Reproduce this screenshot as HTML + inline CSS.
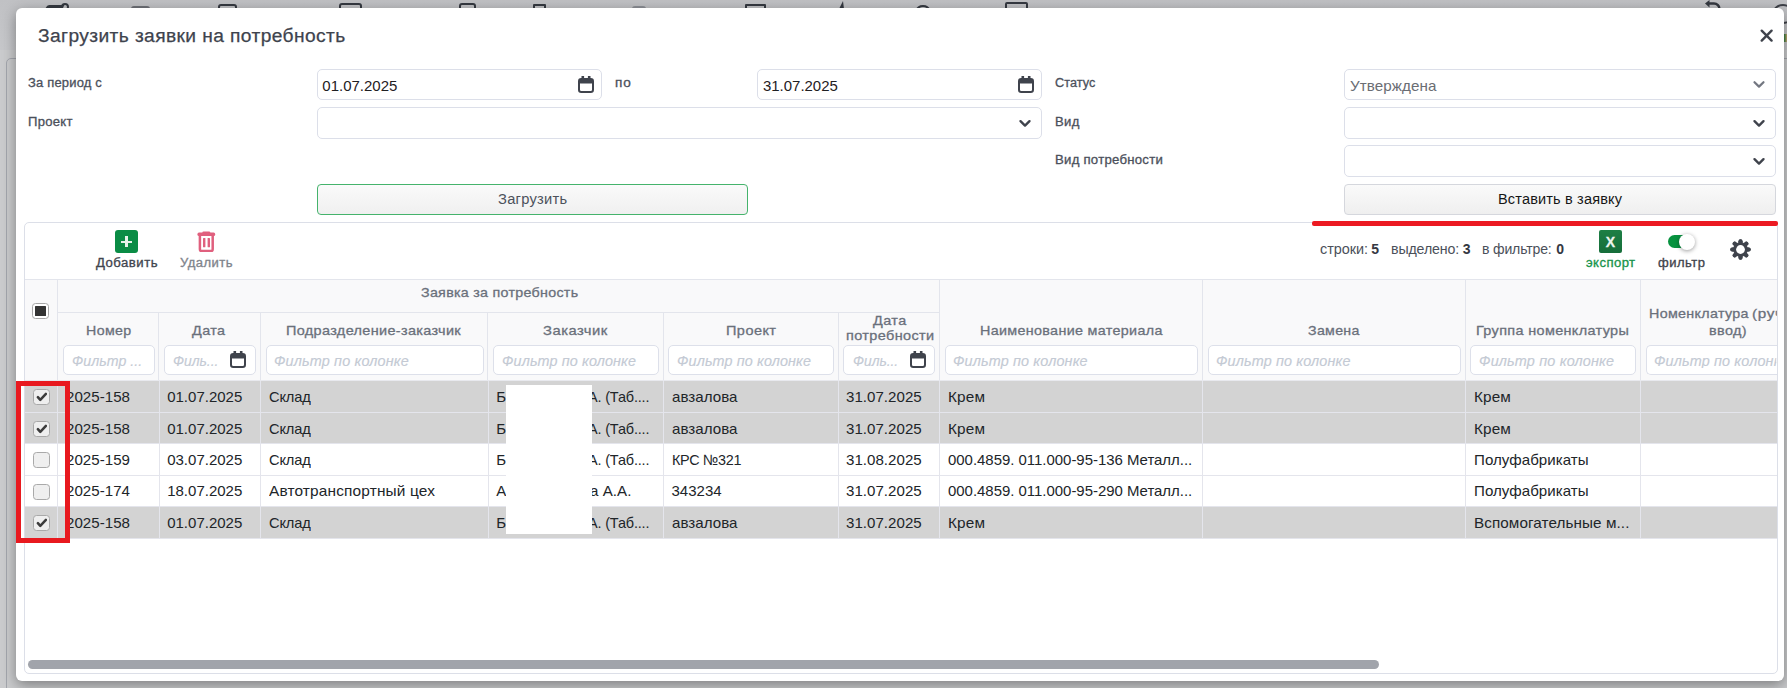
<!DOCTYPE html>
<html><head><meta charset="utf-8">
<style>
*{box-sizing:border-box;margin:0;padding:0}
html,body{width:1787px;height:688px;overflow:hidden}
body{position:relative;background:#cbcccf;font-family:"Liberation Sans",sans-serif}
.a{position:absolute}
.t{position:absolute;white-space:pre;line-height:1}
</style></head><body>
<div class="a" style="left:0;top:0;width:1787px;height:688px;background:#cacbcd"></div>
<div class="a" style="left:0;top:0;width:1787px;height:50px;background:linear-gradient(180deg,#c0c1c4 0,#c6c7ca 100%)"></div>
<div class="a" style="left:6px;top:58px;width:1900px;height:700px;border:1px solid #a3a6ad;border-radius:5px"></div>
<div class="a" style="left:46px;top:5px;width:17px;height:5px;background:#353941;border-radius:2px 0 0 0;transform:skewX(-30deg)"></div>
<div class="a" style="left:61px;top:3px;width:8px;height:8px;border:2px solid #353941;border-radius:50%"></div>
<div class="a" style="left:218px;top:4px;width:19px;height:10px;border:2px solid #353941;border-radius:3px 3px 0 0"></div>
<div class="a" style="left:339px;top:3px;width:23px;height:10px;border:2px solid #353941;border-radius:3px 3px 0 0"></div>
<div class="a" style="left:459px;top:3px;width:17px;height:10px;border:2px solid #353941;border-radius:3px 3px 0 0"></div>
<div class="a" style="left:533px;top:4px;width:13px;height:10px;border:2px solid #353941;border-radius:1px 1px 0 0"></div>
<div class="a" style="left:745px;top:4px;width:21px;height:10px;border:2px solid #353941;border-radius:1px 1px 0 0"></div>
<div class="a" style="left:1005px;top:2px;width:23px;height:10px;border:2px solid #353941;border-radius:2px 2px 0 0"></div>
<div class="a" style="left:131px;top:6px;width:19px;height:4px;background:#6e7177;border-radius:3px 3px 0 0"></div>
<div class="a" style="left:632px;top:6px;width:14px;height:3px;background:#8d9096;border-radius:3px 3px 0 0"></div>
<div class="a" style="left:916px;top:5px;width:14px;height:10px;border:2px solid #353941;border-radius:50% 50% 0 0"></div>
<svg class="a" style="left:836px;top:0" width="10" height="9"><path d="M7 1L3 9H8Z" fill="#353941"/></svg>
<svg class="a" style="left:1701px;top:0" width="24" height="10" viewBox="0 0 24 10"><path d="M8 3.5H13A5.5 5.5 0 0 1 18.5 9" fill="none" stroke="#353941" stroke-width="2.6"/><path d="M8.5 0V7.5L4 3.5Z" fill="#353941"/></svg>
<div class="a" style="left:1772px;top:4px;width:22px;height:20px;border:2.5px solid #3e4148;border-radius:50%"></div>
<div class="a" style="left:1784px;top:34px;width:3px;height:8px;background:linear-gradient(90deg,#2b7a3e,#c9a970)"></div>
<div class="a" style="left:16px;top:8px;width:1768px;height:673px;background:#fff;border-radius:6px;box-shadow:0 4px 14px rgba(0,0,0,.38)"></div>
<svg class="a" style="left:1759px;top:28px" width="15" height="15" viewBox="0 0 15 15"><path d="M2.7 2.7L12.6 12.6M12.6 2.7L2.7 12.6" stroke="#3f434c" stroke-width="2.4" stroke-linecap="round"/></svg>
<div class="a" style="left:317px;top:69px;width:285px;height:31px;border:1px solid #dcdfe9;border-radius:5px;background:#fff"></div>
<div class="a" style="left:757px;top:69px;width:285px;height:31px;border:1px solid #dcdfe9;border-radius:5px;background:#fff"></div>
<div class="a" style="left:317px;top:107px;width:725px;height:32px;border:1px solid #dcdfe9;border-radius:5px;background:#fff"></div>
<div class="a" style="left:1344px;top:69px;width:432px;height:31px;border:1px solid #dcdfe9;border-radius:5px;background:#fff"></div>
<div class="a" style="left:1344px;top:107px;width:432px;height:32px;border:1px solid #dcdfe9;border-radius:5px;background:#fff"></div>
<div class="a" style="left:1344px;top:145px;width:432px;height:32px;border:1px solid #dcdfe9;border-radius:5px;background:#fff"></div>
<div class="a" style="left:317px;top:184px;width:431px;height:31px;border:1px solid #45b36c;border-radius:4px;background:linear-gradient(#fafafa,#f0f0f0)"></div>
<div class="a" style="left:1344px;top:184px;width:432px;height:31px;border:1px solid #d5d7dd;border-radius:4px;background:linear-gradient(#fafafa,#efefef)"></div>
<svg class="a" style="left:578px;top:76px" width="16" height="17" viewBox="0 0 16 17"><rect x="1" y="3" width="14" height="13" rx="2.2" fill="none" stroke="#3f434c" stroke-width="2"/><rect x="1" y="3" width="14" height="4.5" rx="1.5" fill="#3f434c"/><rect x="3.5" y="0" width="2.6" height="4" fill="#3f434c"/><rect x="9.9" y="0" width="2.6" height="4" fill="#3f434c"/></svg>
<svg class="a" style="left:1018px;top:76px" width="16" height="17" viewBox="0 0 16 17"><rect x="1" y="3" width="14" height="13" rx="2.2" fill="none" stroke="#3f434c" stroke-width="2"/><rect x="1" y="3" width="14" height="4.5" rx="1.5" fill="#3f434c"/><rect x="3.5" y="0" width="2.6" height="4" fill="#3f434c"/><rect x="9.9" y="0" width="2.6" height="4" fill="#3f434c"/></svg>
<svg class="a" style="left:1018px;top:118.5px" width="14" height="9" viewBox="0 0 14 9"><path d="M2.5 2.2L7 6.6L11.5 2.2" fill="none" stroke="#3f434c" stroke-width="2.4" stroke-linecap="round" stroke-linejoin="round"/></svg>
<svg class="a" style="left:1752px;top:80px" width="14" height="9" viewBox="0 0 14 9"><path d="M2.5 2.2L7 6.6L11.5 2.2" fill="none" stroke="#737781" stroke-width="2.2" stroke-linecap="round" stroke-linejoin="round"/></svg>
<svg class="a" style="left:1752px;top:118.5px" width="14" height="9" viewBox="0 0 14 9"><path d="M2.5 2.2L7 6.6L11.5 2.2" fill="none" stroke="#3f434c" stroke-width="2.4" stroke-linecap="round" stroke-linejoin="round"/></svg>
<svg class="a" style="left:1752px;top:156.5px" width="14" height="9" viewBox="0 0 14 9"><path d="M2.5 2.2L7 6.6L11.5 2.2" fill="none" stroke="#3f434c" stroke-width="2.4" stroke-linecap="round" stroke-linejoin="round"/></svg>
<div class="a" style="left:24px;top:222px;width:1754px;height:452px;border:1px solid #dcdfe8;border-radius:5px;background:#fff"></div>
<div class="a" style="left:25px;top:279px;width:1752px;height:1px;background:#e3e5ec"></div>
<div class="a" style="left:25px;top:280px;width:1752px;height:100px;background:#f9f9fa"></div>
<div class="a" style="left:115px;top:230px;width:23px;height:23px;background:#0a8c45;border-radius:3px"></div>
<div class="a" style="left:121px;top:240.5px;width:11px;height:2.0px;background:#e6f2ea"></div>
<div class="a" style="left:125.3px;top:236px;width:2.299999999999997px;height:11px;background:#e6f2ea"></div>
<svg class="a" style="left:197px;top:231px" width="19" height="21" viewBox="0 0 19 21"><rect x="5.3" y="0.4" width="8" height="3" rx="1.3" fill="#e0607e"/><rect x="0.4" y="1.6" width="17.8" height="3.4" rx="1.6" fill="#e0607e"/><path d="M2.9 4.6V18.3a1.8 1.8 0 0 0 1.8 1.8H13.9a1.8 1.8 0 0 0 1.8-1.8V4.6" fill="none" stroke="#e0607e" stroke-width="2.5"/><rect x="6" y="7" width="2.4" height="9.3" rx="0.6" fill="#e0607e"/><rect x="10.6" y="7" width="2.4" height="9.3" rx="0.6" fill="#e0607e"/></svg>
<div class="a" style="left:1599px;top:230px;width:23px;height:23px;background:linear-gradient(#1d7f45,#166e3a);border-radius:2px"></div>
<div class="a" style="left:1599px;top:234px;width:23px;text-align:center;font-size:14px;font-weight:bold;color:#eef5f0;line-height:17px;-webkit-text-stroke:0.3px #eef5f0">X</div>
<div class="a" style="left:1668px;top:235px;width:25px;height:13px;border-radius:7px;background:linear-gradient(90deg,#07923f 40%,#2a9d5a)"></div>
<div class="a" style="left:1679px;top:234px;width:16px;height:16px;border-radius:50%;background:#fff;box-shadow:0 1px 4px rgba(0,0,0,.4)"></div>
<svg class="a" style="left:1730px;top:239px" width="21" height="21" viewBox="0 0 21 21"><g fill="#3f434c"><rect x="8.5" y="0.3" width="4" height="20.4" rx="2" transform="rotate(0 10.5 10.5)"/><rect x="8.5" y="0.3" width="4" height="20.4" rx="2" transform="rotate(45 10.5 10.5)"/><rect x="8.5" y="0.3" width="4" height="20.4" rx="2" transform="rotate(90 10.5 10.5)"/><rect x="8.5" y="0.3" width="4" height="20.4" rx="2" transform="rotate(135 10.5 10.5)"/><rect x="8.5" y="0.3" width="4" height="20.4" rx="2" transform="rotate(180 10.5 10.5)"/><rect x="8.5" y="0.3" width="4" height="20.4" rx="2" transform="rotate(225 10.5 10.5)"/><rect x="8.5" y="0.3" width="4" height="20.4" rx="2" transform="rotate(270 10.5 10.5)"/><rect x="8.5" y="0.3" width="4" height="20.4" rx="2" transform="rotate(315 10.5 10.5)"/><circle cx="10.5" cy="10.5" r="7.3"/></g><circle cx="10.5" cy="10.5" r="4.4" fill="#fff"/></svg>
<div class="a" style="left:58px;top:312px;width:881px;height:1px;background:#e3e5ec"></div>
<div class="a" style="left:158px;top:313px;width:1px;height:67px;background:#e3e5ec"></div>
<div class="a" style="left:260px;top:313px;width:1px;height:67px;background:#e3e5ec"></div>
<div class="a" style="left:487px;top:313px;width:1px;height:67px;background:#e3e5ec"></div>
<div class="a" style="left:663px;top:313px;width:1px;height:67px;background:#e3e5ec"></div>
<div class="a" style="left:838px;top:313px;width:1px;height:67px;background:#e3e5ec"></div>
<div class="a" style="left:57px;top:280px;width:1px;height:100px;background:#e3e5ec"></div>
<div class="a" style="left:939px;top:280px;width:1px;height:100px;background:#e3e5ec"></div>
<div class="a" style="left:1202px;top:280px;width:1px;height:100px;background:#e3e5ec"></div>
<div class="a" style="left:1465px;top:280px;width:1px;height:100px;background:#e3e5ec"></div>
<div class="a" style="left:1640px;top:280px;width:1px;height:100px;background:#e3e5ec"></div>
<div class="a" style="left:32px;top:303px;width:17px;height:16px;border:1px solid #a6a6a6;border-radius:3.5px;background:#fff"></div>
<div class="a" style="left:35px;top:306px;width:11px;height:10px;background:#333;border-radius:0.5px"></div>
<div class="a" style="left:63px;top:345px;width:92px;height:30px;border:1px solid #dde0ea;border-radius:5px;background:#fff"></div>
<div class="a" style="left:164px;top:345px;width:92px;height:30px;border:1px solid #dde0ea;border-radius:5px;background:#fff"></div>
<div class="a" style="left:265.5px;top:345px;width:218.0px;height:30px;border:1px solid #dde0ea;border-radius:5px;background:#fff"></div>
<div class="a" style="left:493px;top:345px;width:166px;height:30px;border:1px solid #dde0ea;border-radius:5px;background:#fff"></div>
<div class="a" style="left:668px;top:345px;width:166px;height:30px;border:1px solid #dde0ea;border-radius:5px;background:#fff"></div>
<div class="a" style="left:843px;top:345px;width:92px;height:30px;border:1px solid #dde0ea;border-radius:5px;background:#fff"></div>
<div class="a" style="left:945px;top:345px;width:253px;height:30px;border:1px solid #dde0ea;border-radius:5px;background:#fff"></div>
<div class="a" style="left:1208px;top:345px;width:253px;height:30px;border:1px solid #dde0ea;border-radius:5px;background:#fff"></div>
<div class="a" style="left:1470px;top:345px;width:165.5px;height:30px;border:1px solid #dde0ea;border-radius:5px;background:#fff"></div>
<div class="a" style="left:1646px;top:345px;width:131px;height:30px;border:1px solid #dde0ea;border-radius:5px;background:#fff;border-right:none;border-radius:5px 0 0 5px"></div>
<svg class="a" style="left:230px;top:351px" width="16" height="17" viewBox="0 0 16 17"><rect x="1" y="3" width="14" height="13" rx="2.2" fill="none" stroke="#3f434c" stroke-width="2"/><rect x="1" y="3" width="14" height="4.5" rx="1.5" fill="#3f434c"/><rect x="3.5" y="0" width="2.6" height="4" fill="#3f434c"/><rect x="9.9" y="0" width="2.6" height="4" fill="#3f434c"/></svg>
<svg class="a" style="left:910px;top:351px" width="16" height="17" viewBox="0 0 16 17"><rect x="1" y="3" width="14" height="13" rx="2.2" fill="none" stroke="#3f434c" stroke-width="2"/><rect x="1" y="3" width="14" height="4.5" rx="1.5" fill="#3f434c"/><rect x="3.5" y="0" width="2.6" height="4" fill="#3f434c"/><rect x="9.9" y="0" width="2.6" height="4" fill="#3f434c"/></svg>
<div class="a" style="left:25px;top:380px;width:1752px;height:1px;background:#e8e9ee"></div>
<div class="a" style="left:25px;top:381px;width:1752px;height:31px;background:#d3d3d3"></div>
<div class="a" style="left:25px;top:412px;width:1752px;height:1px;background:#e4e5ec"></div>
<div class="a" style="left:25px;top:413px;width:1752px;height:30px;background:#d3d3d3"></div>
<div class="a" style="left:25px;top:443px;width:1752px;height:1px;background:#e4e5ec"></div>
<div class="a" style="left:25px;top:444px;width:1752px;height:31px;background:#fff"></div>
<div class="a" style="left:25px;top:475px;width:1752px;height:1px;background:#e4e5ec"></div>
<div class="a" style="left:25px;top:476px;width:1752px;height:30px;background:#fff"></div>
<div class="a" style="left:25px;top:506px;width:1752px;height:1px;background:#e4e5ec"></div>
<div class="a" style="left:25px;top:507px;width:1752px;height:31px;background:#d3d3d3"></div>
<div class="a" style="left:25px;top:538px;width:1752px;height:1px;background:#e4e5ec"></div>
<div class="a" style="left:57px;top:381px;width:1px;height:157px;background:#e4e5ec"></div>
<div class="a" style="left:159px;top:381px;width:1px;height:157px;background:#e4e5ec"></div>
<div class="a" style="left:260px;top:381px;width:1px;height:157px;background:#e4e5ec"></div>
<div class="a" style="left:488px;top:381px;width:1px;height:157px;background:#e4e5ec"></div>
<div class="a" style="left:663px;top:381px;width:1px;height:157px;background:#e4e5ec"></div>
<div class="a" style="left:838px;top:381px;width:1px;height:157px;background:#e4e5ec"></div>
<div class="a" style="left:939px;top:381px;width:1px;height:157px;background:#e4e5ec"></div>
<div class="a" style="left:1202px;top:381px;width:1px;height:157px;background:#e4e5ec"></div>
<div class="a" style="left:1465px;top:381px;width:1px;height:157px;background:#e4e5ec"></div>
<div class="a" style="left:1640px;top:381px;width:1px;height:157px;background:#e4e5ec"></div>
<div class="a" style="left:33px;top:389px;width:17px;height:16px;border:1px solid #a9a9a9;border-radius:3.5px;background:#efefef"></div>
<svg class="a" style="left:36px;top:392px" width="11" height="10" viewBox="0 0 11 10"><path d="M1.9 5.2L4.3 7.9L9.9 1.9" fill="none" stroke="#3c3c3c" stroke-width="2.5" stroke-linecap="round" stroke-linejoin="round"/></svg>
<div class="a" style="left:33px;top:421px;width:17px;height:16px;border:1px solid #a9a9a9;border-radius:3.5px;background:#efefef"></div>
<svg class="a" style="left:36px;top:424px" width="11" height="10" viewBox="0 0 11 10"><path d="M1.9 5.2L4.3 7.9L9.9 1.9" fill="none" stroke="#3c3c3c" stroke-width="2.5" stroke-linecap="round" stroke-linejoin="round"/></svg>
<div class="a" style="left:33px;top:452px;width:17px;height:16px;border:1px solid #a9a9a9;border-radius:3.5px;background:#efefef"></div>
<div class="a" style="left:33px;top:484px;width:17px;height:16px;border:1px solid #a9a9a9;border-radius:3.5px;background:#efefef"></div>
<div class="a" style="left:33px;top:515px;width:17px;height:16px;border:1px solid #a9a9a9;border-radius:3.5px;background:#efefef"></div>
<svg class="a" style="left:36px;top:518px" width="11" height="10" viewBox="0 0 11 10"><path d="M1.9 5.2L4.3 7.9L9.9 1.9" fill="none" stroke="#3c3c3c" stroke-width="2.5" stroke-linecap="round" stroke-linejoin="round"/></svg>
<div class="t" style="top:27px;font-size:18px;color:#3e434d;-webkit-text-stroke:0.25px #3e434d;transform:scaleX(1.0655);transform-origin:0 0;letter-spacing:0.378px;left:38.10px;">Загрузить заявки на потребность</div>
<div class="t" style="top:77px;font-size:12.5px;color:#4b505b;-webkit-text-stroke:0.3px #4b505b;transform:scaleX(1.0387);transform-origin:0 0;letter-spacing:0.172px;left:27.80px;">За период с</div>
<div class="t" style="top:116px;font-size:12.5px;color:#4b505b;-webkit-text-stroke:0.3px #4b505b;transform:scaleX(1.0468);transform-origin:0 0;letter-spacing:0.246px;left:28.10px;">Проект</div>
<div class="t" style="top:77px;font-size:12.5px;color:#4b505b;-webkit-text-stroke:0.3px #4b505b;transform:scaleX(1.0859);transform-origin:0 0;letter-spacing:0.724px;left:614.80px;">по</div>
<div class="t" style="top:77px;font-size:12.5px;color:#4b505b;-webkit-text-stroke:0.3px #4b505b;transform:scaleX(1.0134);transform-origin:0 0;letter-spacing:0.070px;left:1055.30px;">Статус</div>
<div class="t" style="top:116px;font-size:12.5px;color:#4b505b;-webkit-text-stroke:0.3px #4b505b;transform:scaleX(1.0471);transform-origin:0 0;letter-spacing:0.339px;left:1055.30px;">Вид</div>
<div class="t" style="top:154px;font-size:12.5px;color:#4b505b;-webkit-text-stroke:0.3px #4b505b;transform:scaleX(1.0533);transform-origin:0 0;letter-spacing:0.239px;left:1055.30px;">Вид потребности</div>
<div class="t" style="top:78px;font-size:15px;color:#1f2023;left:322.30px;">01.07.2025</div>
<div class="t" style="top:78px;font-size:15px;color:#1f2023;transform:scaleX(0.9978);transform-origin:0 0;letter-spacing:-0.012px;left:762.70px;">31.07.2025</div>
<div class="t" style="top:78px;font-size:15px;color:#6a6d73;transform:scaleX(1.0125);transform-origin:0 0;letter-spacing:0.077px;left:1349.70px;">Утверждена</div>
<div class="t" style="top:192px;font-size:14px;color:#4d525c;transform:scaleX(1.0494);transform-origin:0 0;letter-spacing:0.251px;left:498.20px;">Загрузить</div>
<div class="t" style="top:192px;font-size:14px;color:#161616;transform:scaleX(1.0355);transform-origin:0 0;letter-spacing:0.167px;left:1498.20px;">Вставить в заявку</div>
<div class="t" style="top:257px;font-size:12px;color:#41454e;-webkit-text-stroke:0.3px #41454e;transform:scaleX(1.0956);transform-origin:0 0;letter-spacing:0.441px;left:96.00px;">Добавить</div>
<div class="t" style="top:257px;font-size:12px;color:#80848c;-webkit-text-stroke:0.3px #80848c;transform:scaleX(1.0874);transform-origin:0 0;letter-spacing:0.409px;left:179.70px;">Удалить</div>
<div class="t" style="top:257px;font-size:12px;color:#17944a;-webkit-text-stroke:0.3px #17944a;transform:scaleX(1.0917);transform-origin:0 0;letter-spacing:0.397px;left:1586.20px;">экспорт</div>
<div class="t" style="top:257px;font-size:12px;color:#3f434c;-webkit-text-stroke:0.3px #3f434c;transform:scaleX(1.0853);transform-origin:0 0;letter-spacing:0.430px;left:1657.80px;">фильтр</div>
<div class="t" style="top:242px;font-size:14.5px;color:#4b505a;transform:scaleX(0.9938);transform-origin:0 0;letter-spacing:-0.034px;left:1319.80px;">строки:</div>
<div class="t" style="top:242px;font-size:14px;color:#343842;font-weight:bold;left:1371.30px;">5</div>
<div class="t" style="top:242px;font-size:14.5px;color:#4b505a;transform:scaleX(0.9780);transform-origin:0 0;letter-spacing:-0.133px;left:1391.10px;">выделено:</div>
<div class="t" style="top:242px;font-size:14px;color:#343842;font-weight:bold;left:1462.80px;">3</div>
<div class="t" style="top:242px;font-size:14.5px;color:#4b505a;transform:scaleX(0.9693);transform-origin:0 0;letter-spacing:-0.172px;left:1482.40px;">в фильтре:</div>
<div class="t" style="top:242px;font-size:14px;color:#343842;font-weight:bold;left:1556.20px;">0</div>
<div class="t" style="top:286px;font-size:13.5px;color:#6a707b;-webkit-text-stroke:0.3px #6a707b;transform:scaleX(1.0578);transform-origin:0 0;letter-spacing:0.261px;left:421.10px;">Заявка за потребность</div>
<div class="t" style="top:324px;font-size:13.5px;color:#6a707b;-webkit-text-stroke:0.3px #6a707b;transform:scaleX(1.0525);transform-origin:0 0;letter-spacing:0.346px;left:85.60px;">Номер</div>
<div class="t" style="top:324px;font-size:13.5px;color:#6a707b;-webkit-text-stroke:0.3px #6a707b;transform:scaleX(1.0641);transform-origin:0 0;letter-spacing:0.400px;left:192.40px;">Дата</div>
<div class="t" style="top:324px;font-size:13.5px;color:#6a707b;-webkit-text-stroke:0.3px #6a707b;transform:scaleX(1.0704);transform-origin:0 0;letter-spacing:0.326px;left:286.40px;">Подразделение-заказчик</div>
<div class="t" style="top:324px;font-size:13.5px;color:#6a707b;-webkit-text-stroke:0.3px #6a707b;transform:scaleX(1.0957);transform-origin:0 0;letter-spacing:0.461px;left:542.90px;">Заказчик</div>
<div class="t" style="top:324px;font-size:13.5px;color:#6a707b;-webkit-text-stroke:0.3px #6a707b;transform:scaleX(1.0746);transform-origin:0 0;letter-spacing:0.412px;left:725.50px;">Проект</div>
<div class="t" style="top:314px;font-size:13.5px;color:#6a707b;-webkit-text-stroke:0.3px #6a707b;transform:scaleX(1.0661);transform-origin:0 0;letter-spacing:0.412px;left:872.80px;">Дата</div>
<div class="t" style="top:329px;font-size:13.5px;color:#6a707b;-webkit-text-stroke:0.3px #6a707b;transform:scaleX(1.0712);transform-origin:0 0;letter-spacing:0.349px;left:845.90px;">потребности</div>
<div class="t" style="top:324px;font-size:13.5px;color:#6a707b;-webkit-text-stroke:0.3px #6a707b;transform:scaleX(1.0620);transform-origin:0 0;letter-spacing:0.306px;left:979.50px;">Наименование материала</div>
<div class="t" style="top:324px;font-size:13.5px;color:#6a707b;-webkit-text-stroke:0.3px #6a707b;transform:scaleX(1.0503);transform-origin:0 0;letter-spacing:0.303px;left:1307.70px;">Замена</div>
<div class="t" style="top:324px;font-size:13.5px;color:#6a707b;-webkit-text-stroke:0.3px #6a707b;transform:scaleX(1.0690);transform-origin:0 0;letter-spacing:0.327px;left:1476.10px;">Группа номенклатуры</div>
<div class="t" style="top:307px;font-size:13.5px;color:#6a707b;-webkit-text-stroke:0.3px #6a707b;transform:scaleX(1.0589);transform-origin:0 0;letter-spacing:0.305px;left:1648.70px;">Номенклатура</div>
<div class="t" style="top:307px;font-size:13.5px;color:#6a707b;-webkit-text-stroke:0.3px #6a707b;transform:scaleX(1.1304);transform-origin:0 0;letter-spacing:0.617px;left:1751.90px;width:22.2px;overflow:hidden;">(ручной</div>
<div class="t" style="top:324px;font-size:13.5px;color:#6a707b;-webkit-text-stroke:0.3px #6a707b;transform:scaleX(1.0678);transform-origin:0 0;letter-spacing:0.358px;left:1709.20px;">ввод)</div>
<div class="t" style="top:354px;font-size:14px;color:#c4cad4;font-style:italic;-webkit-text-stroke:0.15px #c4cad4;transform:scaleX(1.0102);transform-origin:0 0;letter-spacing:0.051px;left:72.00px;">Фильтр ...</div>
<div class="t" style="top:354px;font-size:14px;color:#c4cad4;font-style:italic;-webkit-text-stroke:0.15px #c4cad4;transform:scaleX(0.9942);transform-origin:0 0;letter-spacing:-0.030px;left:173.10px;">Филь...</div>
<div class="t" style="top:354px;font-size:14px;color:#c4cad4;font-style:italic;-webkit-text-stroke:0.15px #c4cad4;transform:scaleX(1.0289);transform-origin:0 0;letter-spacing:0.150px;left:274.00px;">Фильтр по колонке</div>
<div class="t" style="top:354px;font-size:14px;color:#c4cad4;font-style:italic;-webkit-text-stroke:0.15px #c4cad4;transform:scaleX(1.0251);transform-origin:0 0;letter-spacing:0.131px;left:502.20px;">Фильтр по колонке</div>
<div class="t" style="top:354px;font-size:14px;color:#c4cad4;font-style:italic;-webkit-text-stroke:0.15px #c4cad4;transform:scaleX(1.0251);transform-origin:0 0;letter-spacing:0.131px;left:677.00px;">Фильтр по колонке</div>
<div class="t" style="top:354px;font-size:14px;color:#c4cad4;font-style:italic;-webkit-text-stroke:0.15px #c4cad4;transform:scaleX(0.9903);transform-origin:0 0;letter-spacing:-0.050px;left:852.60px;">Филь...</div>
<div class="t" style="top:354px;font-size:14px;color:#c4cad4;font-style:italic;-webkit-text-stroke:0.15px #c4cad4;transform:scaleX(1.0279);transform-origin:0 0;letter-spacing:0.146px;left:953.40px;">Фильтр по колонке</div>
<div class="t" style="top:354px;font-size:14px;color:#c4cad4;font-style:italic;-webkit-text-stroke:0.15px #c4cad4;transform:scaleX(1.0275);transform-origin:0 0;letter-spacing:0.143px;left:1216.00px;">Фильтр по колонке</div>
<div class="t" style="top:354px;font-size:14px;color:#c4cad4;font-style:italic;-webkit-text-stroke:0.15px #c4cad4;transform:scaleX(1.0303);transform-origin:0 0;letter-spacing:0.157px;left:1478.80px;">Фильтр по колонке</div>
<div class="t" style="top:354px;font-size:14px;color:#c4cad4;font-style:italic;-webkit-text-stroke:0.15px #c4cad4;transform:scaleX(1.0279);transform-origin:0 0;letter-spacing:0.146px;left:1654.40px;width:119.3px;overflow:hidden;">Фильтр по колонке</div>
<div class="t" style="top:389px;font-size:15px;color:#212529;transform:scaleX(1.0056);transform-origin:0 0;letter-spacing:0.034px;left:65.50px;">2025-158</div>
<div class="t" style="top:389px;font-size:15px;color:#212529;left:167.20px;">01.07.2025</div>
<div class="t" style="top:389px;font-size:15px;color:#212529;transform:scaleX(0.9762);transform-origin:0 0;letter-spacing:-0.176px;left:268.60px;">Склад</div>
<div class="t" style="top:389px;font-size:15px;color:#212529;left:496.20px;">Б</div>
<div class="t" style="top:389px;font-size:15px;color:#212529;transform:scaleX(0.9639);transform-origin:0 0;letter-spacing:-0.163px;left:588.00px;">А. (Таб....</div>
<div class="t" style="top:389px;font-size:15px;color:#212529;transform:scaleX(1.0067);transform-origin:0 0;letter-spacing:0.041px;left:671.50px;">авзалова</div>
<div class="t" style="top:389px;font-size:15px;color:#212529;transform:scaleX(1.0050);transform-origin:0 0;letter-spacing:0.028px;left:846.10px;">31.07.2025</div>
<div class="t" style="top:389px;font-size:15px;color:#212529;transform:scaleX(1.0210);transform-origin:0 0;letter-spacing:0.163px;left:947.70px;">Крем</div>
<div class="t" style="top:389px;font-size:15px;color:#212529;transform:scaleX(1.0193);transform-origin:0 0;letter-spacing:0.150px;left:1473.90px;">Крем</div>
<div class="t" style="top:421px;font-size:15px;color:#212529;transform:scaleX(1.0056);transform-origin:0 0;letter-spacing:0.034px;left:65.50px;">2025-158</div>
<div class="t" style="top:421px;font-size:15px;color:#212529;left:167.20px;">01.07.2025</div>
<div class="t" style="top:421px;font-size:15px;color:#212529;transform:scaleX(0.9762);transform-origin:0 0;letter-spacing:-0.176px;left:268.60px;">Склад</div>
<div class="t" style="top:421px;font-size:15px;color:#212529;left:496.20px;">Б</div>
<div class="t" style="top:421px;font-size:15px;color:#212529;transform:scaleX(0.9639);transform-origin:0 0;letter-spacing:-0.163px;left:588.00px;">А. (Таб....</div>
<div class="t" style="top:421px;font-size:15px;color:#212529;transform:scaleX(1.0067);transform-origin:0 0;letter-spacing:0.041px;left:671.50px;">авзалова</div>
<div class="t" style="top:421px;font-size:15px;color:#212529;transform:scaleX(1.0050);transform-origin:0 0;letter-spacing:0.028px;left:846.10px;">31.07.2025</div>
<div class="t" style="top:421px;font-size:15px;color:#212529;transform:scaleX(1.0210);transform-origin:0 0;letter-spacing:0.163px;left:947.70px;">Крем</div>
<div class="t" style="top:421px;font-size:15px;color:#212529;transform:scaleX(1.0193);transform-origin:0 0;letter-spacing:0.150px;left:1473.90px;">Крем</div>
<div class="t" style="top:452px;font-size:15px;color:#212529;transform:scaleX(1.0056);transform-origin:0 0;letter-spacing:0.034px;left:65.50px;">2025-159</div>
<div class="t" style="top:452px;font-size:15px;color:#212529;left:167.20px;">03.07.2025</div>
<div class="t" style="top:452px;font-size:15px;color:#212529;transform:scaleX(0.9762);transform-origin:0 0;letter-spacing:-0.176px;left:268.60px;">Склад</div>
<div class="t" style="top:452px;font-size:15px;color:#212529;left:496.20px;">Б</div>
<div class="t" style="top:452px;font-size:15px;color:#212529;transform:scaleX(0.9639);transform-origin:0 0;letter-spacing:-0.163px;left:588.00px;">А. (Таб....</div>
<div class="t" style="top:452px;font-size:15px;color:#212529;transform:scaleX(0.9582);transform-origin:0 0;letter-spacing:-0.310px;left:671.50px;">КРС №321</div>
<div class="t" style="top:452px;font-size:15px;color:#212529;transform:scaleX(1.0050);transform-origin:0 0;letter-spacing:0.028px;left:846.10px;">31.08.2025</div>
<div class="t" style="top:452px;font-size:15px;color:#212529;transform:scaleX(0.9970);transform-origin:0 0;letter-spacing:-0.015px;left:947.70px;">000.4859. 011.000-95-136 Металл...</div>
<div class="t" style="top:452px;font-size:15px;color:#212529;transform:scaleX(1.0061);transform-origin:0 0;letter-spacing:0.039px;left:1473.90px;">Полуфабрикаты</div>
<div class="t" style="top:483px;font-size:15px;color:#212529;transform:scaleX(1.0056);transform-origin:0 0;letter-spacing:0.034px;left:65.50px;">2025-174</div>
<div class="t" style="top:483px;font-size:15px;color:#212529;left:167.20px;">18.07.2025</div>
<div class="t" style="top:483px;font-size:15px;color:#212529;transform:scaleX(1.0276);transform-origin:0 0;letter-spacing:0.150px;left:268.60px;">Автотранспортный цех</div>
<div class="t" style="top:483px;font-size:15px;color:#212529;left:496.20px;">А</div>
<div class="t" style="top:483px;font-size:15px;color:#212529;transform:scaleX(1.0079);transform-origin:0 0;letter-spacing:0.043px;left:589.50px;">а А.А.</div>
<div class="t" style="top:483px;font-size:15px;color:#212529;letter-spacing:0.011px;left:671.50px;">343234</div>
<div class="t" style="top:483px;font-size:15px;color:#212529;transform:scaleX(1.0050);transform-origin:0 0;letter-spacing:0.028px;left:846.10px;">31.07.2025</div>
<div class="t" style="top:483px;font-size:15px;color:#212529;transform:scaleX(0.9970);transform-origin:0 0;letter-spacing:-0.015px;left:947.70px;">000.4859. 011.000-95-290 Металл...</div>
<div class="t" style="top:483px;font-size:15px;color:#212529;transform:scaleX(1.0061);transform-origin:0 0;letter-spacing:0.039px;left:1473.90px;">Полуфабрикаты</div>
<div class="t" style="top:515px;font-size:15px;color:#212529;transform:scaleX(1.0056);transform-origin:0 0;letter-spacing:0.034px;left:65.50px;">2025-158</div>
<div class="t" style="top:515px;font-size:15px;color:#212529;left:167.20px;">01.07.2025</div>
<div class="t" style="top:515px;font-size:15px;color:#212529;transform:scaleX(0.9762);transform-origin:0 0;letter-spacing:-0.176px;left:268.60px;">Склад</div>
<div class="t" style="top:515px;font-size:15px;color:#212529;left:496.20px;">Б</div>
<div class="t" style="top:515px;font-size:15px;color:#212529;transform:scaleX(0.9639);transform-origin:0 0;letter-spacing:-0.163px;left:588.00px;">А. (Таб....</div>
<div class="t" style="top:515px;font-size:15px;color:#212529;transform:scaleX(1.0067);transform-origin:0 0;letter-spacing:0.041px;left:671.50px;">авзалова</div>
<div class="t" style="top:515px;font-size:15px;color:#212529;transform:scaleX(1.0050);transform-origin:0 0;letter-spacing:0.028px;left:846.10px;">31.07.2025</div>
<div class="t" style="top:515px;font-size:15px;color:#212529;transform:scaleX(1.0210);transform-origin:0 0;letter-spacing:0.163px;left:947.70px;">Крем</div>
<div class="t" style="top:515px;font-size:15px;color:#212529;transform:scaleX(1.0163);transform-origin:0 0;letter-spacing:0.085px;left:1473.90px;">Вспомогательные м...</div>
<div class="a" style="left:506px;top:385px;width:86px;height:149px;background:#fff"></div>
<div class="a" style="left:28px;top:660px;width:1351px;height:9px;border-radius:5px;background:#a1a4ab"></div>
<div class="a" style="left:1312px;top:221px;width:466px;height:5px;background:#ec1a22;border-radius:2px"></div>
<div class="a" style="left:16px;top:381px;width:54px;height:162px;border:5px solid #e8191f"></div>
</body></html>
